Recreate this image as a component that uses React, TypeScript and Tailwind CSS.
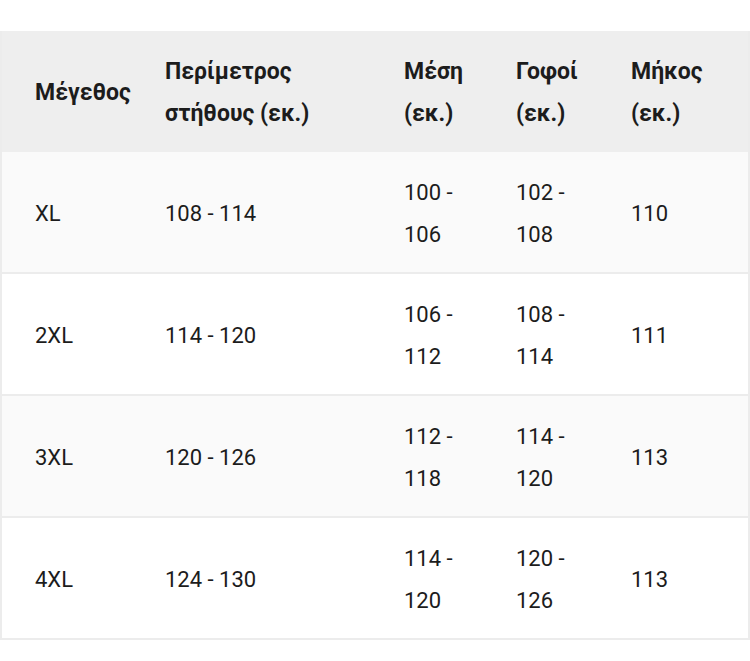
const headers = [
  ['Μέγεθος'],
  ['Περίμετρος', 'στήθους (εκ.)'],
  ['Μέση', '(εκ.)'],
  ['Γοφοί', '(εκ.)'],
  ['Μήκος', '(εκ.)'],
];

const rows = [
  [['XL'], ['108 - 114'], ['100 -', '106'], ['102 -', '108'], ['110']],
  [['2XL'], ['114 - 120'], ['106 -', '112'], ['108 -', '114'], ['111']],
  [['3XL'], ['120 - 126'], ['112 -', '118'], ['114 -', '120'], ['113']],
  [['4XL'], ['124 - 130'], ['114 -', '120'], ['120 -', '126'], ['113']],
];

const cols = 'grid grid-cols-[130px_239px_112px_115px_1fr]';

function Cell({ lines }: { lines: string[] }) {
  return (
    <div className="flex flex-col justify-center pl-[33px] pt-[3px]">
      {lines.map((l, i) => (
        <span key={i} className="whitespace-nowrap leading-[42px]">
          {l}
        </span>
      ))}
    </div>
  );
}

export default function App() {
  return (
    <div className="min-h-screen bg-white pt-[31px] font-['Roboto',sans-serif] text-[22px] text-[#1c1c1c]">
      <div className="w-[750px] border-x-2 border-b-2 border-[#ececec]">
        <div className={`${cols} h-[121px] bg-[#eeeeee] text-[23px] font-bold`}>
          {headers.map((h, i) => (
            <Cell key={i} lines={h} />
          ))}
        </div>
        {rows.map((r, i) => (
          <div
            key={i}
            className={`${cols} h-[122px] border-b-2 border-[#ececec] last:border-b-0 last:h-[120px] ${
              i % 2 === 0 ? 'bg-[#fafafa]' : 'bg-white'
            }`}
          >
            {r.map((c, j) => (
              <Cell key={j} lines={c} />
            ))}
          </div>
        ))}
      </div>
    </div>
  );
}
